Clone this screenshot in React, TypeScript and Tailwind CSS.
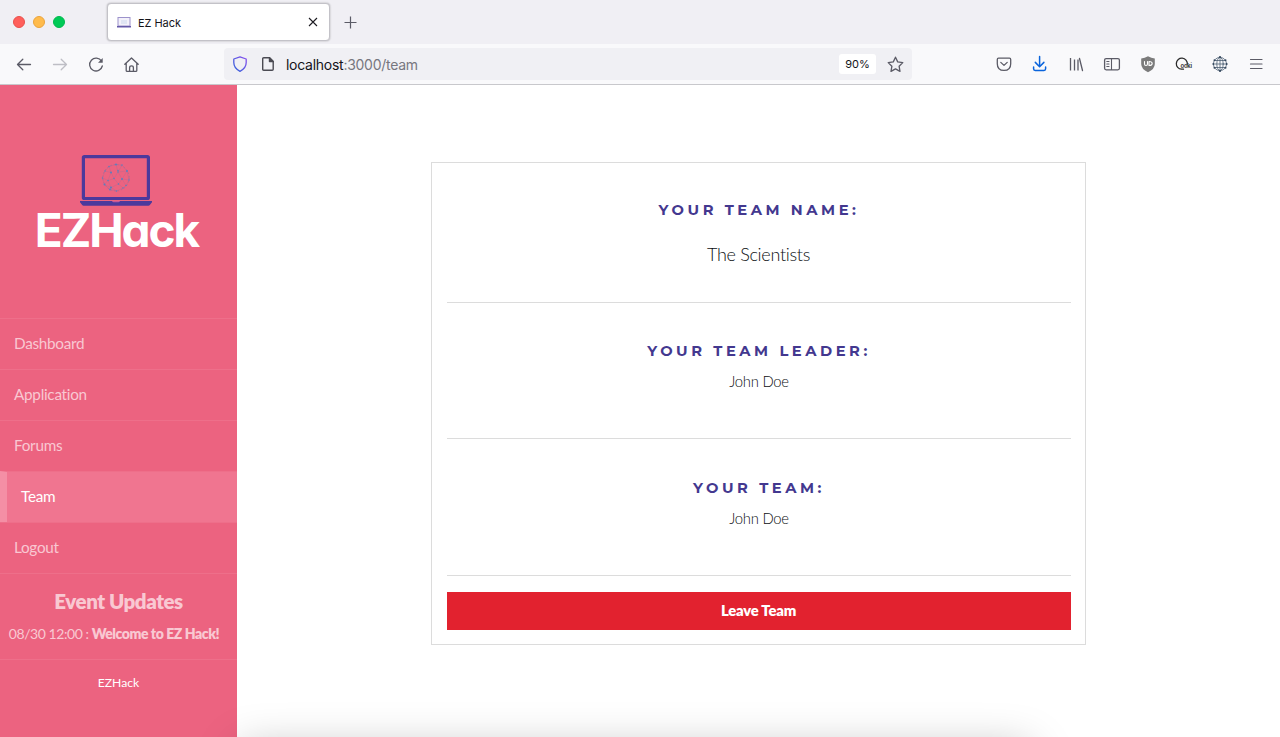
import React from "react";

const navItems = ["Dashboard", "Application", "Forums", "Team", "Logout"];

const nodes: [number, number][] = [
  [116, 164.5], [122, 165], [109, 166.5], [127, 171], [105, 171], [118, 172], [111, 172.5], [102.5, 178],
  [129, 180], [122, 179], [114, 178.5], [108, 180.5], [104.5, 184.5], [118.5, 184], [126, 185.5], [111, 187.5],
  [123, 188], [116.5, 191], [110, 189.5], [118, 170.5],
];

const links: [number, number][] = [
  [0, 1], [0, 2], [1, 3], [2, 4], [0, 5], [2, 6], [4, 6], [4, 7], [3, 8], [3, 9], [5, 9], [6, 10], [5, 10],
  [7, 11], [6, 11], [11, 10], [10, 13], [9, 13], [9, 14], [8, 14], [7, 12], [11, 12], [12, 15], [11, 15],
  [13, 15], [13, 16], [14, 16], [15, 17], [16, 17], [15, 18], [12, 18], [18, 17], [8, 9], [1, 5], [3, 5],
];

function LaptopLogo() {
  return (
    <svg width="72" height="52" viewBox="80 154 72 52" className="block">
      <rect x="83.4" y="156.6" width="65" height="41.900" rx="1" fill="none" stroke="#4c399c" strokeWidth="3.200" />
      <path d="M80 201h72v1.200l-2 2.600q-.6.9-1.600.9H83.600q-1 0-1.600-.9L80 202.200z" fill="#4c399c" />
      <path d="M112 201h8q-.5 1.300-1.700 1.300h-4.600q-1.200 0-1.700-1.300z" fill="#e0609a" opacity=".8" />
      <g stroke="#8b6fa0" strokeWidth=".5" opacity=".45">
        {links.map(([a, b], i) => (
          <line key={i} x1={nodes[a][0]} y1={nodes[a][1]} x2={nodes[b][0]} y2={nodes[b][1]} />
        ))}
      </g>
      <circle cx="116" cy="177.700" r="13.200" fill="none" stroke="#8b6fa0" strokeWidth=".8" strokeDasharray="1.500 2" opacity=".7" />
      <g fill="#5a7fc0">
        {nodes.map(([x, y], i) => (
          <circle key={i} cx={x} cy={y} r={i % 3 === 0 ? 1 : 0.75} />
        ))}
      </g>
    </svg>
  );
}

function TabStrip() {
  return (
    <div className="flex h-11 shrink-0 items-start bg-[#f0eff4]">
      <div className="flex h-11 w-[107px] items-center gap-2 pl-[13px]">
        <span className="size-3 rounded-full border border-[#e9504c] bg-[#ff5f5b]" />
        <span className="size-3 rounded-full border border-[#eba43c] bg-[#ffbb4c]" />
        <span className="size-3 rounded-full border border-[#00b94e] bg-[#00ca56]" />
      </div>
      <div className="mt-[3px] flex h-[38px] w-[223px] items-center rounded border border-[#c3c2c8] bg-white pl-[9px] pr-[11px] shadow-[0_0_2px_rgba(0,0,0,0.3)]">
        <svg width="14" height="11" viewBox="0 0 14 11">
          <rect x="1" y=".5" width="12" height="8.500" fill="#f3f1fa" stroke="#9c92cb" />
          <path d="M4 3h6v4H4z" fill="#dfe4f3" />
          <path d="M0 9h14v1.500H0z" fill="#6458a8" />
        </svg>
        <span className="ml-[7px] mt-[2px] text-[11px] tracking-[-0.050px] text-[#15141a]">EZ Hack</span>
        <svg className="ml-auto" width="10" height="10" viewBox="0 0 10 10" stroke="#1d1c22" strokeWidth="1.100">
          <path d="M1 1l8 8M9 1l-8 8" />
        </svg>
      </div>
      <svg className="ml-[14px] mt-4" width="13" height="13" viewBox="0 0 13 13" stroke="#5b5b66" strokeWidth="1.200">
        <path d="M6.500.5v12M.5 6.500h12" />
      </svg>
    </div>
  );
}

function NavButtons() {
  return (
    <svg width="130" height="20" viewBox="14 54 130 20" fill="none" stroke="#5b5b66" strokeWidth="1.300" strokeLinecap="round" strokeLinejoin="round">
      <path d="M30.500 64.500h-13M22.800 59.200l-5.300 5.300 5.300 5.300" />
      <path d="M53.500 64.500h13M61.200 59.200l5.300 5.300-5.300 5.300" stroke="#bebec5" />
      <path d="M101.500 61.200a6.400 6.400 0 1 0 .8 4.800" />
      <path d="M102.700 58v4.700H98z" fill="#5b5b66" stroke="none" />
      <path d="M124.800 64.200l6.700-6.200 6.700 6.200M126.200 63.200v7.200q0 1 1 1h8.600q1 0 1-1v-7.200M129.600 71.200v-3.500q0-1.800 1.900-1.800t1.900 1.800v3.500" />
    </svg>
  );
}

function AddressBar() {
  return (
    <div className="ml-20 flex h-8 w-[688px] items-center rounded bg-[#f0f0f4] pl-[9px] pr-2">
      <svg width="14" height="16" viewBox="0 0 14 16" fill="none">
        <defs>
          <linearGradient id="shield" x1="0" y1="1" x2="1" y2="0">
            <stop offset="0" stopColor="#2f62d8" />
            <stop offset="1" stopColor="#8a50ee" />
          </linearGradient>
        </defs>
        <path d="M7 .8l6.200 2.200v3.600c0 4.200-2.200 6.800-6.200 8.700C3 13.400.8 10.800.8 6.600V3z" stroke="url(#shield)" strokeWidth="1.300" strokeLinejoin="round" />
      </svg>
      <svg className="ml-[15px]" width="12" height="14" viewBox="0 0 12 14" fill="none" stroke="#4a4a52" strokeWidth="1.400" strokeLinejoin="round">
        <path d="M1.700.8h5.800l3.700 3.700v7.700q0 1-1 1H1.700q-1 0-1-1V1.800q0-1 1-1z" />
        <path d="M7.500.8v3.700h3.700z" fill="#4a4a52" />
      </svg>
      <span className="ml-[12px] text-[14px] tracking-[-0.270px] text-[#77777f]">
        <span className="text-[#15141a]">localhost</span>:3000/team
      </span>
      <span className="ml-auto flex h-5 w-[37px] items-center justify-center rounded-[3px] bg-white text-[11px] text-[#15141a]">90%</span>
      <svg className="ml-[11px]" width="17" height="17" viewBox="0 0 17 17" fill="none" stroke="#5b5b66" strokeWidth="1.300" strokeLinejoin="round">
        <path d="M8.500 1.200l2.200 4.700 5.100.7-3.700 3.600.9 5.200-4.500-2.500L4 15.400l.9-5.200L1.200 6.600l5.100-.7z" />
      </svg>
    </div>
  );
}

function ToolbarIcons() {
  return (
    <svg className="ml-auto mr-[14px]" width="274" height="24" viewBox="992 52 274 24" fill="none" stroke="#5b5b66" strokeWidth="1.300" strokeLinecap="round" strokeLinejoin="round">
      <path d="M998.500 58.200h11q1.200 0 1.200 1.200v4.300q0 6.700-6.700 6.700t-6.700-6.700v-4.300q0-1.200 1.200-1.200zM1000.800 62.400l3.200 3 3.200-3" />
      <path d="M1039.600 56.500v10M1035.300 62.400l4.300 4.300 4.300-4.300M1033.600 67v1.800q0 1.600 1.600 1.600h8.800q1.600 0 1.600-1.600V67" stroke="#0a64dc" strokeWidth="1.500" />
      <path d="M1070.500 58v12.500M1074.500 59.500v11M1078 59.500v11" strokeLinecap="butt" />
      <path d="M1079.500 58.500l3 12" />
      <rect x="1104.600" y="58.600" width="14.800" height="11.200" rx="1.500" />
      <path d="M1111.500 59v10.500M1106.800 61.500h2.200M1106.800 64h2.200M1106.800 66.500h2.200" strokeWidth="1.100" />
      <path d="M1148 56.200q3.200 2 6.800 2.200v5.500q0 5-6.800 8.400-6.800-3.400-6.800-8.400v-5.500q3.600-.2 6.800-2.200z" fill="#7b7b7b" stroke="none" />
      <path d="M1144.500 61.500v2.500q0 1.500 1.500 1.500t1.500-1.500v-2.500M1149 61.500v4q3.200 0 3.200-2t-3.200-2" stroke="#fff" strokeWidth="1.100" />
      <path d="M1181.500 69.200a5.500 5.500 0 1 1 5.800-5M1182 69.200h1.500" stroke="#2b2b2b" strokeWidth="1.300" />
      <text x="1180.600" y="68.300" fill="#2b2b2b" stroke="none" fontSize="6" fontWeight="600" fontFamily="Inter" letterSpacing="-.3">ooki</text>
      <g stroke="#4d5f74" strokeWidth=".8">
        <circle cx="1220" cy="64" r="6.600" />
        <ellipse cx="1220" cy="64" rx="3.200" ry="6.600" />
        <path d="M1213.400 64h13.200M1220 57.400v13.200M1214.600 60.500h10.800M1214.600 67.500h10.800" />
      </g>
      <g fill="#33465c" stroke="none">
        <circle cx="1220" cy="57" r="1.100" /><circle cx="1220" cy="71" r="1.100" />
        <circle cx="1213.300" cy="64" r=".9" /><circle cx="1226.700" cy="64" r=".9" />
        <circle cx="1214.500" cy="60.300" r="1" /><circle cx="1225.500" cy="60.300" r="1" />
        <circle cx="1214.500" cy="67.700" r="1" /><circle cx="1225.500" cy="67.700" r="1" />
      </g>
      <path d="M1250.500 59.500h11.500M1250.500 64h11.500M1250.500 68.500h11.500" strokeWidth="1.200" />
    </svg>
  );
}

function Sidebar() {
  return (
    <aside className="flex w-[237px] shrink-0 flex-col bg-[#ec6380] text-[#f9c8d2]">
      <div className="flex h-[233px] flex-col items-center pt-[69px]">
        <div className="pr-[5px]"><LaptopLogo /></div>
        <div className="mt-[1px] whitespace-nowrap pr-[4px] font-['Inter',sans-serif] text-[46px] font-bold leading-[46px] tracking-[-2px] text-white [font-feature-settings:'cv11']">
          EZHack
        </div>
      </div>
      <nav className="border-b border-[#ee6f8a]">
        {navItems.map((item) => (
          <a
            key={item}
            className={
              item === "Team"
                ? "flex h-[51px] items-center border-l-[7px] border-t border-l-[#f48fa5] border-t-[#ee6f8a] bg-[#f07590] pb-[2px] pl-[14px] text-[15.300px] tracking-[-0.280px] text-white"
                : "flex h-[51px] items-center border-t border-[#ee6f8a] pb-[2px] pl-[14px] text-[15.300px] tracking-[-0.280px]"
            }
          >
            {item}
          </a>
        ))}
      </nav>
      <section className="h-[86px] whitespace-nowrap border-b border-[#ee6f8a] pt-[14px] text-center">
        <h2 className="text-[20.500px] font-extrabold leading-[26px] tracking-[-0.450px]">Event Updates</h2>
        <p className="mt-[10px] pr-[9px] text-[14px] leading-5 tracking-[-0.440px]">
          08/30 12:00 : <b className="font-extrabold">Welcome to EZ Hack!</b>
        </p>
      </section>
      <p className="mt-[14px] text-center text-[12.200px] leading-[18px] text-white">EZHack</p>
    </aside>
  );
}

const headingClass = "font-['Montserrat','Inter',sans-serif] text-[14.700px] font-bold leading-5 tracking-[3.550px] text-[#43388f]";

function TeamCard() {
  return (
    <section className="ml-[194px] mt-[77px] flex h-[483px] w-[655px] flex-col border border-[#dcdcdc] pl-[15px] pr-[14px] text-center font-light text-[#0c0f12]">
      <div className="h-[140px] border-b border-[#dcdcdc] pt-[37px]">
        <h3 className={headingClass}>YOUR TEAM NAME:</h3>
        <p className="mt-[22px] pr-[1px] text-[18px] leading-6 tracking-[-0.300px]">The Scientists</p>
      </div>
      <div className="h-[136px] border-b border-[#dcdcdc] pt-[38px]">
        <h3 className={headingClass}>YOUR TEAM LEADER:</h3>
        <p className="mt-[10px] text-[14.800px] leading-5 tracking-[-0.250px]">John Doe</p>
      </div>
      <div className="h-[137px] border-b border-[#dcdcdc] pt-[39px]">
        <h3 className={headingClass}>YOUR TEAM:</h3>
        <p className="mt-[10px] text-[14.800px] leading-5 tracking-[-0.250px]">John Doe</p>
      </div>
      <button className="mt-4 h-[38px] bg-[#e2222f] pb-[2px] pr-[1px] text-[14.800px] font-extrabold tracking-[-0.200px] text-white">Leave Team</button>
    </section>
  );
}

export default function App() {
  return (
    <div className="relative flex h-[737px] w-[1280px] flex-col overflow-hidden bg-white font-['Lato',sans-serif]">
      <header className="shrink-0 font-['Inter',sans-serif]">
        <TabStrip />
        <div className="flex h-[41px] items-center border-b border-[#c8c8cc] bg-[#f9f9fb] pl-[14px]">
          <NavButtons />
          <AddressBar />
          <ToolbarIcons />
        </div>
      </header>
      <div className="flex min-h-0 flex-1">
        <Sidebar />
        <main className="flex-1 bg-white">
          <TeamCard />
        </main>
      </div>
      <div className="absolute left-[240px] top-[748px] h-10 w-[790px] shadow-[0_0_44px_rgba(0,0,0,0.26)]" />
    </div>
  );
}
